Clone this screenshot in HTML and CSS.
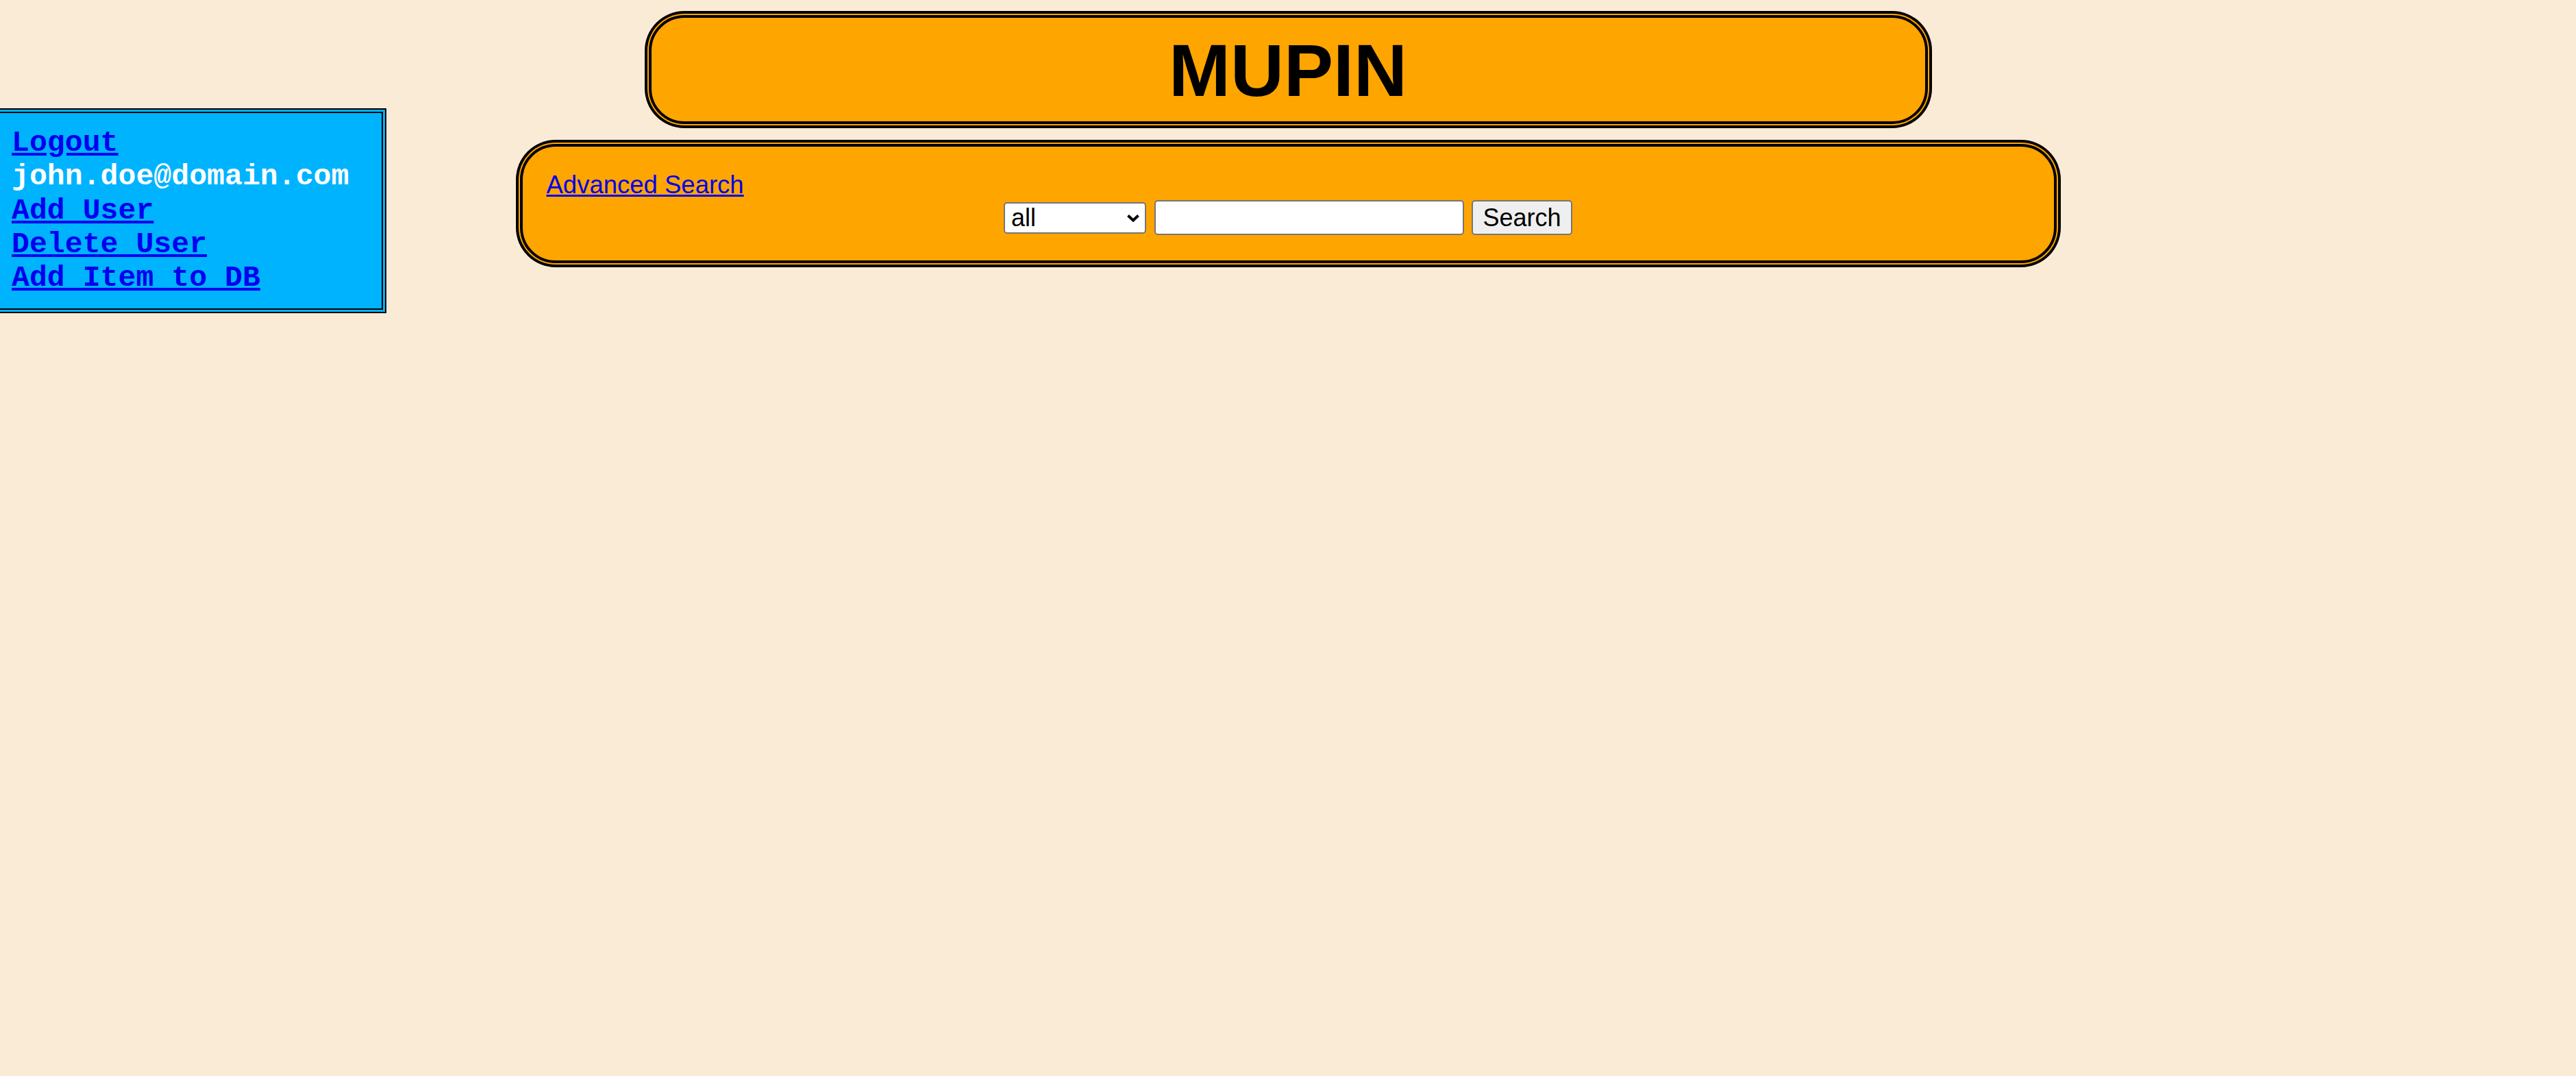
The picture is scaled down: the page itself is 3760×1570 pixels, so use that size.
FILE: index.html
```html
<!DOCTYPE html>
<html>
<head>
<meta charset="utf-8">
<title>MUPIN</title>
<link rel="stylesheet" href="styles.css">
</head>
<body>
<div class="page">
  <div class="side-col">
    <nav class="sidebar">
      <div class="side-line"><a href="#">Logout</a></div>
      <div class="side-line user">john.doe@domain.com</div>
      <div class="side-line"><a href="#">Add User</a></div>
      <div class="side-line"><a href="#">Delete User</a></div>
      <div class="side-line"><a href="#">Add Item to DB</a></div>
    </nav>
  </div>
  <main class="main">
    <header class="banner">
      <h1 class="title">MUPIN</h1>
    </header>
    <section class="search">
      <div class="adv-line"><a href="#" class="adv">Advanced Search</a></div>
      <form class="search-row">
        <span class="select-wrap">
          <select class="field-select">
            <option>all</option>
          </select>
          <svg class="chev" width="20" height="12" viewBox="0 0 20 12" aria-hidden="true">
            <path d="M2.5 2.5 L10 9.5 L17.5 2.5" fill="none" stroke="#000" stroke-width="4" stroke-linecap="butt" stroke-linejoin="miter"/>
          </svg>
        </span>
        <input class="field-text" type="text">
        <button class="search-btn" type="button">Search</button>
      </form>
    </section>
  </main>
</div>
</body>
</html>
```

FILE: styles.css
```css
html, body {
  margin: 0;
  padding: 0;
  background: #faebd7;
}

body {
  font-family: "Liberation Sans", Arial, sans-serif;
  width: 3760px;
  min-height: 1570px;
}

.page {
  display: flex;
  align-items: flex-start;
}

.side-col {
  width: 564px;
  flex: none;
  padding-top: 158px;
}

.sidebar {
  box-sizing: border-box;
  width: 564px;
  background: #00b3ff;
  border: 7px double #000;
  border-left: none;
  padding: 19px 16px 20px 17px;
  font-family: "Liberation Mono", "Courier New", monospace;
  font-weight: bold;
  font-size: 43.2px;
  line-height: 49.25px;
}

.side-line {
  white-space: nowrap;
}

.sidebar a {
  color: #0000ee;
  text-decoration: underline;
}

.user {
  color: #fff;
}

.main {
  flex: 1;
  margin-right: 564px;
  padding-top: 22px;
  display: flex;
  flex-direction: column;
  align-items: center;
  gap: 29px;
}

.banner,
.search {
  box-sizing: border-box;
  background: #ffa500;
  border: 4px solid #000;
  border-radius: 52px;
  box-shadow: 0 0 0 2px #ffa500, 0 0 0 6px #000;
}

.banner {
  width: 1867px;
  padding: 15px 0 12px;
  text-align: center;
}

.title {
  margin: 0;
  font-family: "Liberation Sans", Arial, sans-serif;
  font-weight: bold;
  font-size: 108px;
  line-height: 124px;
  color: #000;
}

.search {
  width: 2243px;
  padding: 35px 35px 37px;
}

.adv-line {
  font-size: 36.5px;
  line-height: 41px;
}

.adv {
  color: #0000ee;
  text-decoration: underline;
}

.search-row {
  margin: 2px 0 0;
  display: flex;
  justify-content: center;
  align-items: center;
  gap: 11.5px;
}

.select-wrap {
  position: relative;
  display: block;
  width: 208px;
  height: 46px;
}

.chev {
  position: absolute;
  right: 9px;
  top: 17px;
  pointer-events: none;
}

.field-select,
.field-text,
.search-btn {
  box-sizing: border-box;
  font-family: "Liberation Sans", Arial, sans-serif;
  font-size: 36px;
  border: 2px solid #767676;
  border-radius: 5px;
  margin: 0;
  color: #000;
}

.field-select {
  -webkit-appearance: none;
  appearance: none;
  display: block;
  width: 208px;
  height: 46px;
  background: #fff;
  padding: 0 0 0 9px;
}

.field-text {
  width: 452px;
  height: 51px;
  background: #fff;
  padding: 0 6px;
}

.search-btn {
  width: 147px;
  height: 51px;
  background: #efefef;
  padding: 0;
}
```
